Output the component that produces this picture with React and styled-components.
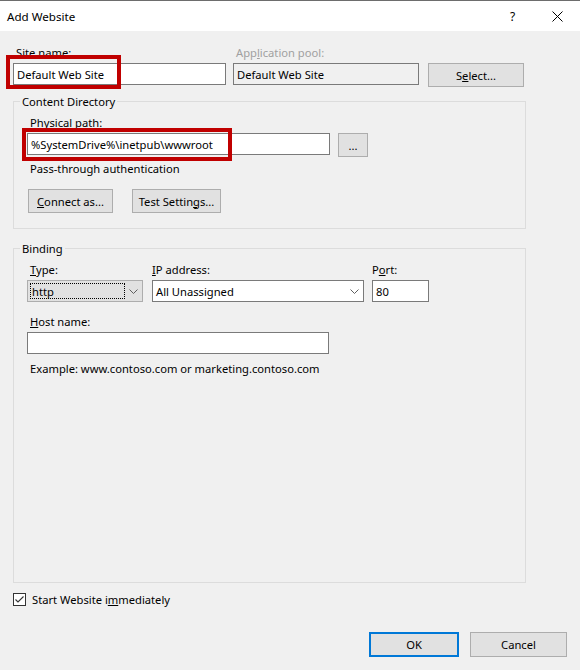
import React from "react";
import styled, { createGlobalStyle } from "styled-components";

const GlobalStyle = createGlobalStyle`
  html, body {
    margin: 0;
    padding: 0;
    background: #f0f0f0;
  }
  body {
    font-family: "Noto Sans", "Liberation Sans", sans-serif;
    font-size: 11.2px;
    color: #000;
  }
  * {
    box-sizing: border-box;
  }
`;

export default function App() {
  return (
    <Window>
      <GlobalStyle />
      <TitleBar>
        <Title>Add Website</Title>
        <TitleButton>?</TitleButton>
        <TitleButton>
          <svg width="11" height="11" viewBox="0 0 11 11">
            <path d="M0.5 0.5 L10.5 10.5 M10.5 0.5 L0.5 10.5" stroke="#000" strokeWidth="1" />
          </svg>
        </TitleButton>
      </TitleBar>

      <Body>
        <TopRow>
          <Field $width={213} $gap={7}>
            <Label>Site <Key>n</Key>ame:</Label>
            <TextBox>Default Web Site</TextBox>
            <Highlight style={{ left: -7, top: 10, width: 115, height: 34 }} />
          </Field>
          <Field $width={186} $gap={9}>
            <Label $disabled>App<Key>l</Key>ication pool:</Label>
            <TextBox $readOnly>Default Web Site</TextBox>
          </Field>
          <Button $width={96} $offset={18}>
            S<Key>e</Key>lect...
          </Button>
        </TopRow>

        <GroupBox $top={14}>
          <GroupTitle>Content Directory</GroupTitle>
          <Label $top={6}>Physical path:</Label>
          <PathRow>
            <TextBox $width={303}>%SystemDrive%\inetpub\wwwroot</TextBox>
            <Button $width={30} $gapLeft={8}>...</Button>
            <Highlight style={{ left: -5, top: -5, width: 210, height: 33 }} />
          </PathRow>
          <Note $top={4}>Pass-through authentication</Note>
          <ButtonRow>
            <Button $width={85}>
              <Key>C</Key>onnect as...
            </Button>
            <Button $width={89}>
              Test Settin<Key>g</Key>s...
            </Button>
          </ButtonRow>
        </GroupBox>

        <GroupBox $top={19} $grow>
          <GroupTitle>Binding</GroupTitle>
          <BindingRow>
            <Field $width={116} $gap={9} $top={6}>
              <Label>
                <Key>T</Key>ype:
              </Label>
              <Combo $variant="button">
                <FocusRect>http</FocusRect>
                <Chevron />
              </Combo>
            </Field>
            <Field $width={212} $gap={8} $top={6}>
              <Label $pad={0}>
                <Key>I</Key>P address:
              </Label>
              <Combo>
                <ComboValue>All Unassigned</ComboValue>
                <Chevron />
              </Combo>
            </Field>
            <Field $width={57} $top={6}>
              <Label $pad={0}>
                P<Key>o</Key>rt:
              </Label>
              <TextBox>80</TextBox>
            </Field>
          </BindingRow>
          <Label $top={12}>
            <Key>H</Key>ost name:
          </Label>
          <TextBox $width={302} />
          <Note $top={7}>Example: www.contoso.com or marketing.contoso.com</Note>
        </GroupBox>

        <CheckRow>
          <CheckBox>
            <svg width="11" height="11" viewBox="0 0 11 11">
              <polyline points="1.5,5.5 4,8 9.5,2.5" fill="none" stroke="#333" strokeWidth="1.1" />
            </svg>
          </CheckBox>
          <span>
            Start Website i<Key>m</Key>mediately
          </span>
        </CheckRow>

        <Footer>
          <Button $width={90} $height={25} $default>
            OK
          </Button>
          <Button $width={97} $height={25}>
            Cancel
          </Button>
        </Footer>
      </Body>
    </Window>
  );
}

function Chevron() {
  return (
    <ChevronBox>
      <svg width="9" height="5" viewBox="0 0 9 5">
        <polyline points="0.5,0.5 4.5,4.5 8.5,0.5" fill="none" stroke="#5f5f5f" strokeWidth="1" />
      </svg>
    </ChevronBox>
  );
}

const Window = styled.div`
  width: 580px;
  height: 670px;
  display: flex;
  flex-direction: column;
  border-top: 1px solid #6d6d6d;
  background: #f0f0f0;
  overflow: hidden;
`;

const TitleBar = styled.div`
  height: 30px;
  flex: none;
  display: flex;
  align-items: center;
  padding-left: 7px;
  background: #fff;
`;

const Title = styled.div`
  flex: 1;
  font-size: 11.6px;
`;

const TitleButton = styled.div`
  width: 45px;
  height: 30px;
  display: flex;
  align-items: center;
  justify-content: center;
  font-size: 12px;
`;

const Body = styled.div`
  flex: 1;
  display: flex;
  flex-direction: column;
  padding: 14px 13px 13px;
`;

const TopRow = styled.div`
  display: flex;
  align-items: flex-start;
`;

const Field = styled.div`
  position: relative;
  display: flex;
  flex-direction: column;
  width: ${(p) => p.$width}px;
  margin-right: ${(p) => p.$gap || 0}px;
  margin-top: ${(p) => p.$top || 0}px;
`;

const Label = styled.div`
  line-height: 15px;
  padding-left: ${(p) => (p.$pad === undefined ? 3 : p.$pad)}px;
  margin-top: ${(p) => p.$top || 0}px;
  margin-bottom: 3px;
  color: ${(p) => (p.$disabled ? "#a0a0a0" : "#000")};
  white-space: nowrap;
`;

const Key = styled.u`
  text-decoration: underline;
  text-underline-offset: 1px;
`;

const TextBox = styled.div`
  height: 22px;
  width: ${(p) => (p.$width ? `${p.$width}px` : "100%")};
  display: flex;
  align-items: center;
  padding: 0 3px;
  border: 1px solid #7a7a7a;
  background: ${(p) => (p.$readOnly ? "#f0f0f0" : "#fff")};
  white-space: nowrap;
  overflow: hidden;
`;

const Highlight = styled.div`
  position: absolute;
  border: 4px solid #c00000;
  pointer-events: none;
`;

const Button = styled.button`
  width: ${(p) => p.$width}px;
  height: ${(p) => p.$height || 24}px;
  margin-top: ${(p) => p.$offset || 0}px;
  margin-left: ${(p) => p.$gapLeft || 0}px;
  padding: 0;
  display: flex;
  align-items: center;
  justify-content: center;
  background: #e1e1e1;
  border: ${(p) => (p.$default ? "2px solid #0078d7" : "1px solid #adadad")};
  font-family: inherit;
  font-size: inherit;
  color: #000;
  white-space: nowrap;
`;

const GroupBox = styled.div`
  width: 513px;
  margin-top: ${(p) => p.$top}px;
  flex: ${(p) => (p.$grow ? 1 : "none")};
  display: flex;
  flex-direction: column;
  align-items: flex-start;
  padding: 0 13px 15px;
  border: 1px solid #dcdcdc;
`;

const GroupTitle = styled.div`
  margin: -8px 0 0 -7px;
  padding: 0 2px;
  line-height: 15px;
  background: #f0f0f0;
`;

const PathRow = styled.div`
  position: relative;
  display: flex;
  align-items: flex-start;
`;

const Note = styled.div`
  margin-top: ${(p) => p.$top}px;
  padding-left: 3px;
  line-height: 15px;
`;

const ButtonRow = styled.div`
  display: flex;
  gap: 19px;
  margin-top: 13px;
  padding-left: 1px;
`;

const BindingRow = styled.div`
  display: flex;
  align-items: flex-start;
`;

const Combo = styled.div`
  height: 22px;
  display: flex;
  align-items: center;
  border: 1px solid ${(p) => (p.$variant === "button" ? "#adadad" : "#7a7a7a")};
  background: ${(p) => (p.$variant === "button" ? "#e1e1e1" : "#fff")};
`;

const FocusRect = styled.div`
  flex: 1;
  height: 16px;
  margin-left: 2px;
  display: flex;
  align-items: center;
  padding-left: 1px;
  border: 1px dotted #000;
`;

const ComboValue = styled.div`
  flex: 1;
  padding-left: 3px;
  white-space: nowrap;
`;

const ChevronBox = styled.div`
  width: 17px;
  flex: none;
  display: flex;
  align-items: center;
  justify-content: center;
`;

const CheckRow = styled.div`
  display: flex;
  align-items: center;
  gap: 6px;
  height: 15px;
  margin-top: 9px;
`;

const CheckBox = styled.div`
  width: 13px;
  height: 13px;
  display: flex;
  align-items: center;
  justify-content: center;
  border: 1px solid #333;
  background: #fff;
`;

const Footer = styled.div`
  display: flex;
  justify-content: flex-end;
  gap: 11px;
  margin-top: 25px;
`;
